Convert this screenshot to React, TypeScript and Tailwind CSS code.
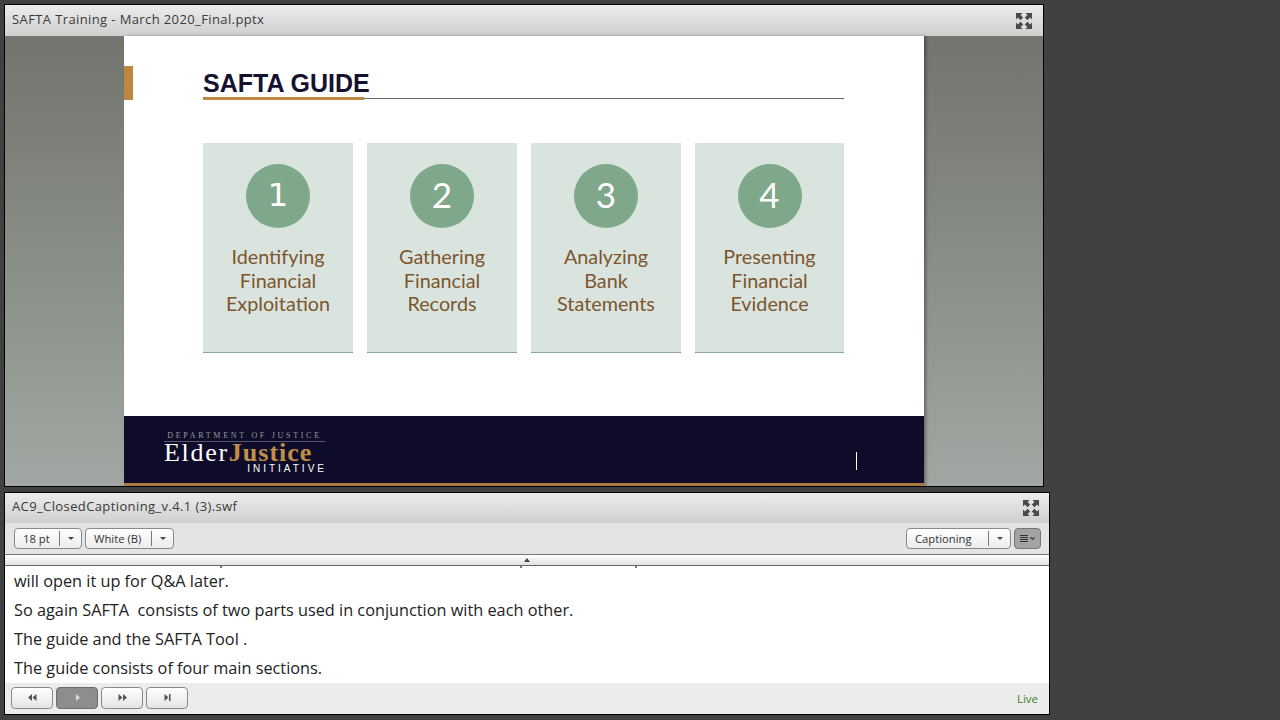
import { ChevronDown } from "lucide-react";

const cards = [
  { n: "1", lines: ["Identifying", "Financial", "Exploitation"] },
  { n: "2", lines: ["Gathering", "Financial", "Records"] },
  { n: "3", lines: ["Analyzing", "Bank", "Statements"] },
  { n: "4", lines: ["Presenting", "Financial", "Evidence"] },
];

const uiFont = "font-['Open_Sans','Noto_Sans',sans-serif]";

function ExpandIcon() {
  return (
    <svg width="16" height="16" viewBox="0 0 16 16" fill="#4a4a4a">
      <path d="M0 0h6.5L4.6 1.9 7.2 4.5 4.5 7.2 1.9 4.6 0 6.5z" />
      <path d="M16 0H9.5l1.9 1.9-2.6 2.6 2.7 2.7 2.6-2.6L16 6.5z" />
      <path d="M0 16h6.5l-1.9-1.9 2.6-2.6-2.7-2.7-2.6 2.6L0 9.5z" />
      <path d="M16 16H9.5l1.9-1.9-2.6-2.6 2.7-2.7 2.6 2.6L16 9.5z" />
    </svg>
  );
}

function PanelHeader({ title, pad }: { title: string; pad: string }) {
  return (
    <div className={`flex items-center justify-between bg-gradient-to-b from-[#ececec] to-[#cfcfcf] ${pad}`}>
      <span className="mb-[2px] text-[13px] tracking-[0.39px] text-[#3a3a3a]">{title}</span>
      <ExpandIcon />
    </div>
  );
}

function Select({ label, width }: { label: string; width: string }) {
  return (
    <div className={`flex h-[21px] items-center rounded-[4px] border border-[#8a8a8a] bg-gradient-to-b from-white to-[#ececec] ${width}`}>
      <span className="mt-[1px] flex-1 pl-[8px] text-[11.25px] text-[#333]">{label}</span>
      <span className="h-[15px] w-px bg-[#777]" />
      <span className="flex w-[21px] justify-center">
        <span className="h-0 w-0 border-x-[3px] border-t-[3px] border-x-transparent border-t-[#444]" />
      </span>
    </div>
  );
}

function Transport({ active, children }: { active?: boolean; children: React.ReactNode }) {
  return (
    <div
      className={`flex h-[22px] w-[42px] items-center justify-center rounded-[4px] border ${
        active
          ? "border-[#6d6d6d] bg-[#8d8d8d]"
          : "border-[#8a8a8a] bg-gradient-to-b from-white to-[#e4e4e4]"
      }`}
    >
      {children}
    </div>
  );
}

function Glyph({ d, fill = "#555" }: { d: string; fill?: string }) {
  return (
    <svg width="9" height="7" viewBox="0 0 9 7" fill={fill}>
      <path d={d} />
    </svg>
  );
}

export default function App() {
  return (
    <div className={`flex h-[720px] w-[1280px] flex-col bg-[#414141] pl-[4px] pt-[4px] ${uiFont}`}>
      <section className="flex h-[483px] w-[1040px] flex-col border border-black">
        <PanelHeader title="SAFTA Training - March 2020_Final.pptx" pad="h-[31px] pl-[7px] pr-[11px]" />
        <div className="flex flex-1 justify-center bg-gradient-to-b from-[#71756d] to-[#a3a7a3]">
          <div className="flex h-[450px] w-[800px] flex-col bg-white shadow-[2px_0_3px_rgba(0,0,0,0.35)]">
            <div className="flex h-[107px] items-start pt-[30px]">
              <div className="h-[34px] w-[9px] bg-[#bd873f]" />
              <div className="ml-[70px] w-[641px] font-['Liberation_Sans',sans-serif]">
                <div className="h-[28px] text-[25px] font-bold leading-[34px] text-[#14122e]">SAFTA GUIDE</div>
                <div className="relative mt-[4px] h-px bg-[#666]">
                  <div className="absolute -top-[1px] left-0 h-[3px] w-[161px] bg-[#bd873f]" />
                </div>
              </div>
            </div>
            <div className="ml-[79px] flex gap-[14px] font-['Lato',sans-serif]">
              {cards.map((c) => (
                <div
                  key={c.n}
                  className="flex h-[210px] w-[150px] flex-col items-center border-b border-[#86a98f] bg-[#dae4df] pt-[21px] last:w-[149px]"
                >
                  <div
                    className={`flex h-[64px] w-[64px] items-center justify-center rounded-full bg-[#7fa88a] pb-[3px] text-white ${
                      c.n === "1" ? "font-['DejaVu_Sans',sans-serif] text-[32px]" : "text-[35px]"
                    }`}
                  >
                    {c.n}
                  </div>
                  <div className="mt-[17px] text-center text-[19.8px] leading-[23.5px] text-[#7c562c]">
                    {c.lines.map((l) => (
                      <div key={l}>{l}</div>
                    ))}
                  </div>
                </div>
              ))}
            </div>
            <div className="mt-[63px] flex h-[70px] items-start justify-between border-b-[3px] border-[#a97a3c] bg-[#0e0c29] pl-[40px] pr-[67px]">
              <div className="mt-[15px] w-[161px]">
                <div className="whitespace-nowrap border-b border-[#55556b] pb-[1px] text-center font-['Liberation_Serif',serif] text-[8px] leading-[9px] tracking-[2.7px] text-[#9a9a9a]">
                  DEPARTMENT OF JUSTICE
                </div>
                <div className="h-[22px] whitespace-nowrap font-['Liberation_Serif',serif] text-[26px] leading-[22px] tracking-[1.7px] text-white">
                  Elder<span className="font-bold tracking-[1px] text-[#c09049]">Justice</span>
                </div>
                <div className="-mr-[2px] text-right font-['Liberation_Sans',sans-serif] text-[10px] leading-[10px] tracking-[3px] text-white">
                  INITIATIVE
                </div>
              </div>
              <div className="mt-[36px] h-[18px] w-px bg-white" />
            </div>
          </div>
        </div>
      </section>

      <section className="mt-[5px] flex h-[223px] w-[1046px] flex-col border border-black">
        <PanelHeader title="AC9_ClosedCaptioning_v.4.1 (3).swf" pad="h-[30px] pl-[7px] pr-[10px]" />
        <div className="flex h-[32px] items-center border-b border-[#777] bg-[#e4e4e4] pl-[9px] pr-[8px]">
          <div className="flex gap-[3px]">
            <Select label="18 pt" width="w-[68px]" />
            <Select label="White (B)" width="w-[89px]" />
          </div>
          <div className="ml-auto flex gap-[3px]">
            <Select label="Captioning" width="w-[105px]" />
            <div className="flex h-[21px] w-[27px] items-center justify-center gap-[1px] rounded-[4px] border border-[#777] bg-[#a3a3a3]">
              <div className="flex w-[8px] flex-col gap-[1px]">
                <span className="h-px bg-[#333]" />
                <span className="h-px bg-[#333]" />
                <span className="h-px bg-[#333]" />
                <span className="h-px bg-[#333]" />
              </div>
              <ChevronDown size={7} strokeWidth={4} className="text-[#333]" />
            </div>
          </div>
        </div>
        <div className="flex h-[11px] items-center justify-center border-b border-[#666] bg-gradient-to-b from-white to-[#e2e2e2]">
          <span className="h-0 w-0 border-x-[3px] border-b-[4px] border-x-transparent border-b-[#444]" />
        </div>
        <div className="h-[117px] overflow-hidden bg-white pl-[9px] text-[16.3px] text-[#222]">
          {/* descenders of the caption line scrolled out of view */}
          <div className="flex h-[2px]">
            <span className="ml-[206px] h-[2px] w-[2px] bg-[#777]" />
            <span className="ml-[298px] h-[2px] w-[2px] bg-[#777]" />
            <span className="ml-[113px] h-[2px] w-[2px] bg-[#777]" />
          </div>
          <div className="-mt-[1px] leading-[29px]">will open it up for Q&amp;A later.</div>
          <div className="leading-[29px]">So again SAFTA&nbsp; consists of two parts used in conjunction with each other.</div>
          <div className="leading-[29px]">The guide and the SAFTA Tool .</div>
          <div className="leading-[29px]">The guide consists of four main sections.</div>
        </div>
        <div className="flex flex-1 items-center gap-[3px] bg-[#ececec] pb-[2px] pl-[6px] pr-[11px]">
          <Transport>
            <Glyph d="M4 0v7L0 3.5zM8.5 0v7l-4-3.5z" />
          </Transport>
          <Transport active>
            <Glyph d="M3 0v7l4-3.5z" fill="#d8d8d8" />
          </Transport>
          <Transport>
            <Glyph d="M0.5 0v7l4-3.5zM5 0v7l4-3.5z" />
          </Transport>
          <Transport>
            <Glyph d="M1.5 0v7l4-3.5zM6 0h1.5v7H6z" />
          </Transport>
          <span className="ml-auto mt-[2px] text-[11.5px] text-[#3f7f2f]">Live</span>
        </div>
      </section>
    </div>
  );
}
